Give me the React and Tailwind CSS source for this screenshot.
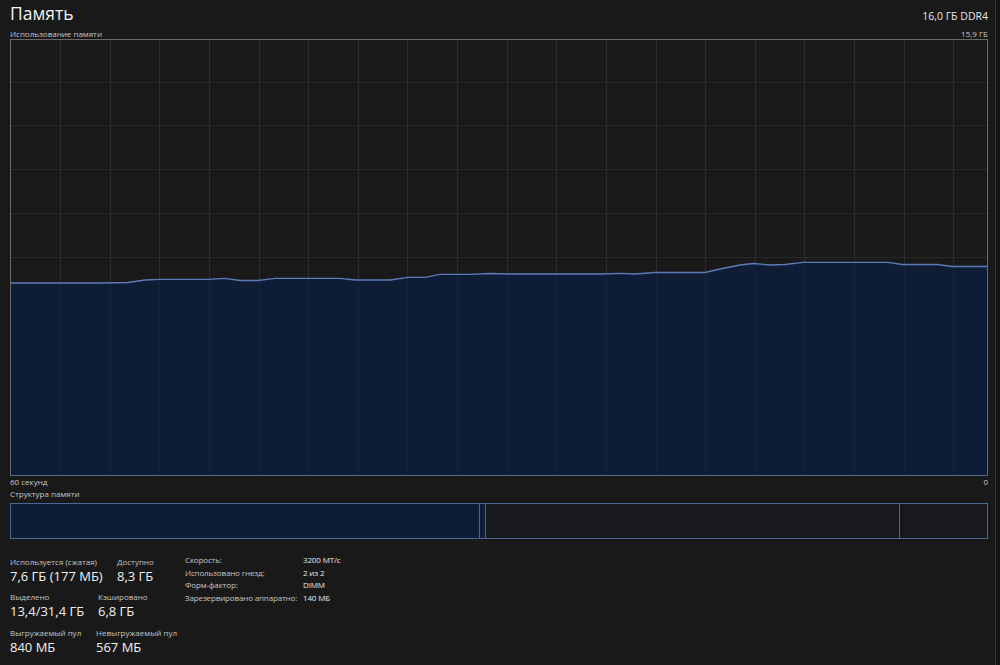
import React from "react";

const FONT = { fontFamily: '"Open Sans", "Noto Sans", sans-serif' };

const linePts = [
  [10, 283], [100, 283], [128, 282.5], [145, 280], [160, 279.3], [208, 279.3], [225, 278.3],
  [240, 280.5], [258, 280.5], [275, 278.3], [340, 278.3], [355, 280], [390, 280], [408, 277.3],
  [425, 277.3], [440, 274.3], [470, 274.3], [490, 273.5], [510, 274], [600, 274], [620, 273.3],
  [635, 274], [655, 272.5], [705, 272.5], [720, 269], [740, 265], [753, 263.5], [770, 265],
  [785, 264.5], [803, 262.3], [888, 262.3], [902, 264.5], [937, 264.5], [952, 266.5], [988, 266.5],
];

function Chart() {
  const W = 976;
  const H = 435;
  const pts = linePts.map(([x, y]) => [x - 11, y - 40]);
  const line = pts.map(([x, y], i) => `${i ? "L" : "M"}${x},${y}`).join(" ");
  const area = `${line} L${W},${H} L0,${H} Z`;
  const vlines = [];
  for (let k = 0; k < 19; k++) vlines.push(Math.round(60 + k * 49.63 - 11) + 0.5);
  const hlines = [];
  for (let k = 0; k < 9; k++) hlines.push(Math.round(81.7 + k * 43.7 - 40) + 0.5);
  return (
    <svg width={W} height={H} className="block">
      {vlines.map((x, i) => (
        <line key={"v" + i} x1={x} x2={x} y1={0} y2={H} stroke="#2a2a2a" strokeWidth="1" />
      ))}
      {hlines.map((y, i) => (
        <line key={"h" + i} x1={0} x2={W} y1={y} y2={y} stroke="#2a2a2a" strokeWidth="1" />
      ))}
      <path d={area} fill="#0e1c38" fillOpacity="0.95" />
      {vlines.map((x, i) => (
        <line key={"v2" + i} x1={x} x2={x} y1={0} y2={H} stroke="#26314a" strokeOpacity="0.3" strokeWidth="1" />
      ))}
      <path d={line} fill="none" stroke="#5d7bb6" strokeWidth="1.3" />
    </svg>
  );
}

function Stat({ label, value, w }) {
  return (
    <div className={w}>
      <div className="text-[8px] leading-[12px] h-[12px] text-[#c4c4c4] whitespace-nowrap">{label}</div>
      <div className="text-[13px] leading-[17px] h-[17px] text-[#f0f0f0] whitespace-nowrap">{value}</div>
    </div>
  );
}

export default function App() {
  return (
    <div className="w-[1000px] h-[665px] bg-[#191919] flex overflow-hidden" style={FONT}>
      <div className="w-[995px] pl-[10px] pr-[7px] flex flex-col">
        <div className="h-[28px] flex items-start justify-between">
          <div className="text-[17.5px] leading-[24px] pt-[1px] text-[#f2f2f2]">Память</div>
          <div className="text-[10.5px] leading-[14px] pt-[9px] text-[#e6e6e6]">16,0 ГБ DDR4</div>
        </div>
        <div className="h-[11px] flex justify-between text-[8px] leading-[11px] text-[#c8c8c8]">
          <span>Использование памяти</span>
          <span>15,9 ГБ</span>
        </div>
        <div className="w-[978px] h-[437px] border border-[#6a6a6a] border-b-[#52678f]">
          <Chart />
        </div>
        <div className="h-[12px] flex justify-between text-[8px] leading-[12px] text-[#c8c8c8]">
          <span>60 секунд</span>
          <span>0</span>
        </div>
        <div className="h-[12px] text-[8px] leading-[12px] text-[#c8c8c8]">Структура памяти</div>
        <div className="mt-[3px] w-[978px] h-[36px] border border-[#4a6696] flex">
          <div className="w-[468px] bg-[#0e1c38]" />
          <div className="w-[1px] bg-[#4a6696]" />
          <div className="w-[5px] bg-[#0e1c38]" />
          <div className="w-[1px] bg-[#4a6696]" />
          <div className="w-[413px] bg-[#17191e]" />
          <div className="w-[1px] bg-[#4a6696]" />
          <div className="flex-1 bg-[#17191e]" />
        </div>
        <div className="mt-[17px] flex">
          <div className="w-[175px] flex flex-col">
            <div className="flex mb-[6px]">
              <Stat w="w-[107px]" label="Используется (сжатая)" value="7,6 ГБ (177 МБ)" />
              <Stat w="" label="Доступно" value="8,3 ГБ" />
            </div>
            <div className="flex mb-[7px]">
              <Stat w="w-[88px]" label="Выделено" value="13,4/31,4 ГБ" />
              <Stat w="" label="Кэшировано" value="6,8 ГБ" />
            </div>
            <div className="flex">
              <Stat w="w-[86px]" label="Выгружаемый пул" value="840 МБ" />
              <Stat w="" label="Невыгружаемый пул" value="567 МБ" />
            </div>
          </div>
          <div className="-mt-[2px] flex text-[8px] leading-[12.5px] tracking-[-0.15px]">
            <div className="w-[118px] text-[#c4c4c4] whitespace-nowrap">
              <div>Скорость:</div>
              <div>Использовано гнезд:</div>
              <div>Форм-фактор:</div>
              <div>Зарезервировано аппаратно:</div>
            </div>
            <div className="text-[#e6e6e6] whitespace-nowrap">
              <div>3200 МТ/с</div>
              <div>2 из 2</div>
              <div>DIMM</div>
              <div>140 МБ</div>
            </div>
          </div>
        </div>
      </div>
      <div className="w-[1px] bg-[#333333]" />
      <div className="flex-1 bg-[#141414]" />
    </div>
  );
}
